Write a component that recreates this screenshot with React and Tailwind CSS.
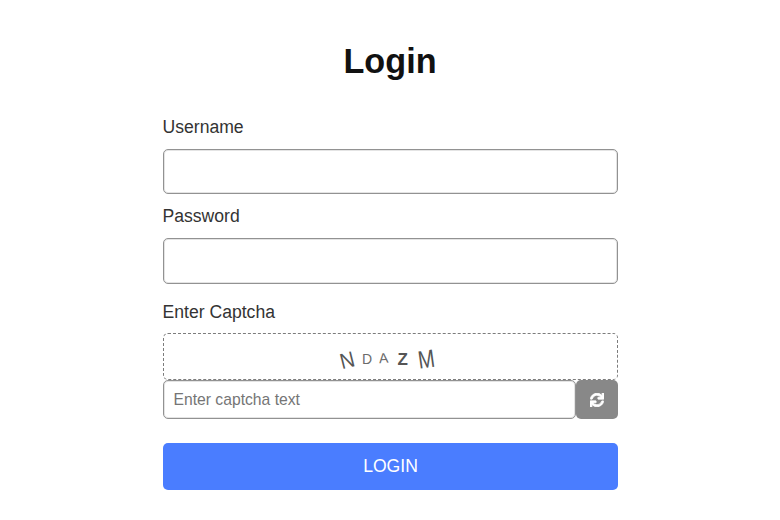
import { FaSync } from "react-icons/fa";

export default function App() {
  return (
    <div className="w-[780px] h-[520px] bg-white flex flex-col items-center font-['Liberation_Sans',Arial,sans-serif] overflow-hidden">
      <div className="w-[455px] flex flex-col">
        <h1 className="mt-[41px] h-[40px] leading-[40px] text-[34.2px] font-bold text-center text-[#111]">Login</h1>
        <label className="mt-[35px] h-[22px] leading-[22px] text-[17.6px] text-[#333]">Username</label>
        <input className="mt-[11px] h-[45px] border border-[#929292] shadow-[inset_0_0_0_1px_#e4e4e4] rounded-[5px] outline-none" />
        <label className="mt-[11px] h-[22px] leading-[22px] text-[17.6px] text-[#333]">Password</label>
        <input type="password" className="mt-[11px] h-[46px] border border-[#929292] shadow-[inset_0_0_0_1px_#e4e4e4] rounded-[5px] outline-none" />
        <label className="mt-[17px] h-[22px] leading-[22px] text-[17.6px] text-[#333]">Enter Captcha</label>
        <div className="mt-[10px] h-[47px] border border-dashed border-[#7c7c7c] rounded-[5px] flex items-center justify-center text-[#555] pr-[6px] pt-[4px]">
          <span className="inline-block text-[20px] -rotate-[14deg] scale-y-110 mr-[8px] translate-y-[1px]">N</span>
          <span className="inline-block text-[14px] mr-[7px] text-[#6b6b6b] translate-y-[1px]">D</span>
          <span className="inline-block text-[14px] -rotate-[4deg] mr-[9px] text-[#6b6b6b]">A</span>
          <span className="inline-block text-[17px] font-bold mr-[10px] translate-y-[1px]">Z</span>
          <span className="inline-block text-[20px] -rotate-[8deg] scale-y-125">M</span>
        </div>
        <div className="flex h-[39px]">
          <input
            placeholder="Enter captcha text"
            className="flex-1 min-w-0 border border-[#929292] shadow-[inset_0_0_0_1px_#e4e4e4] rounded-[5px] px-[10px] text-[15.7px] text-[#333] outline-none placeholder:text-[#757575]"
          />
          <button className="w-[42px] bg-[#888] rounded-[5px] flex items-center justify-center text-white">
            <FaSync className="w-[14px] h-[14px]" stroke="currentColor" strokeWidth="30" />
          </button>
        </div>
        <button className="mt-[24px] h-[47px] bg-[#4a7dff] rounded-[5px] text-white text-[17.6px] text-center pl-[1px]">LOGIN</button>
      </div>
    </div>
  );
}
